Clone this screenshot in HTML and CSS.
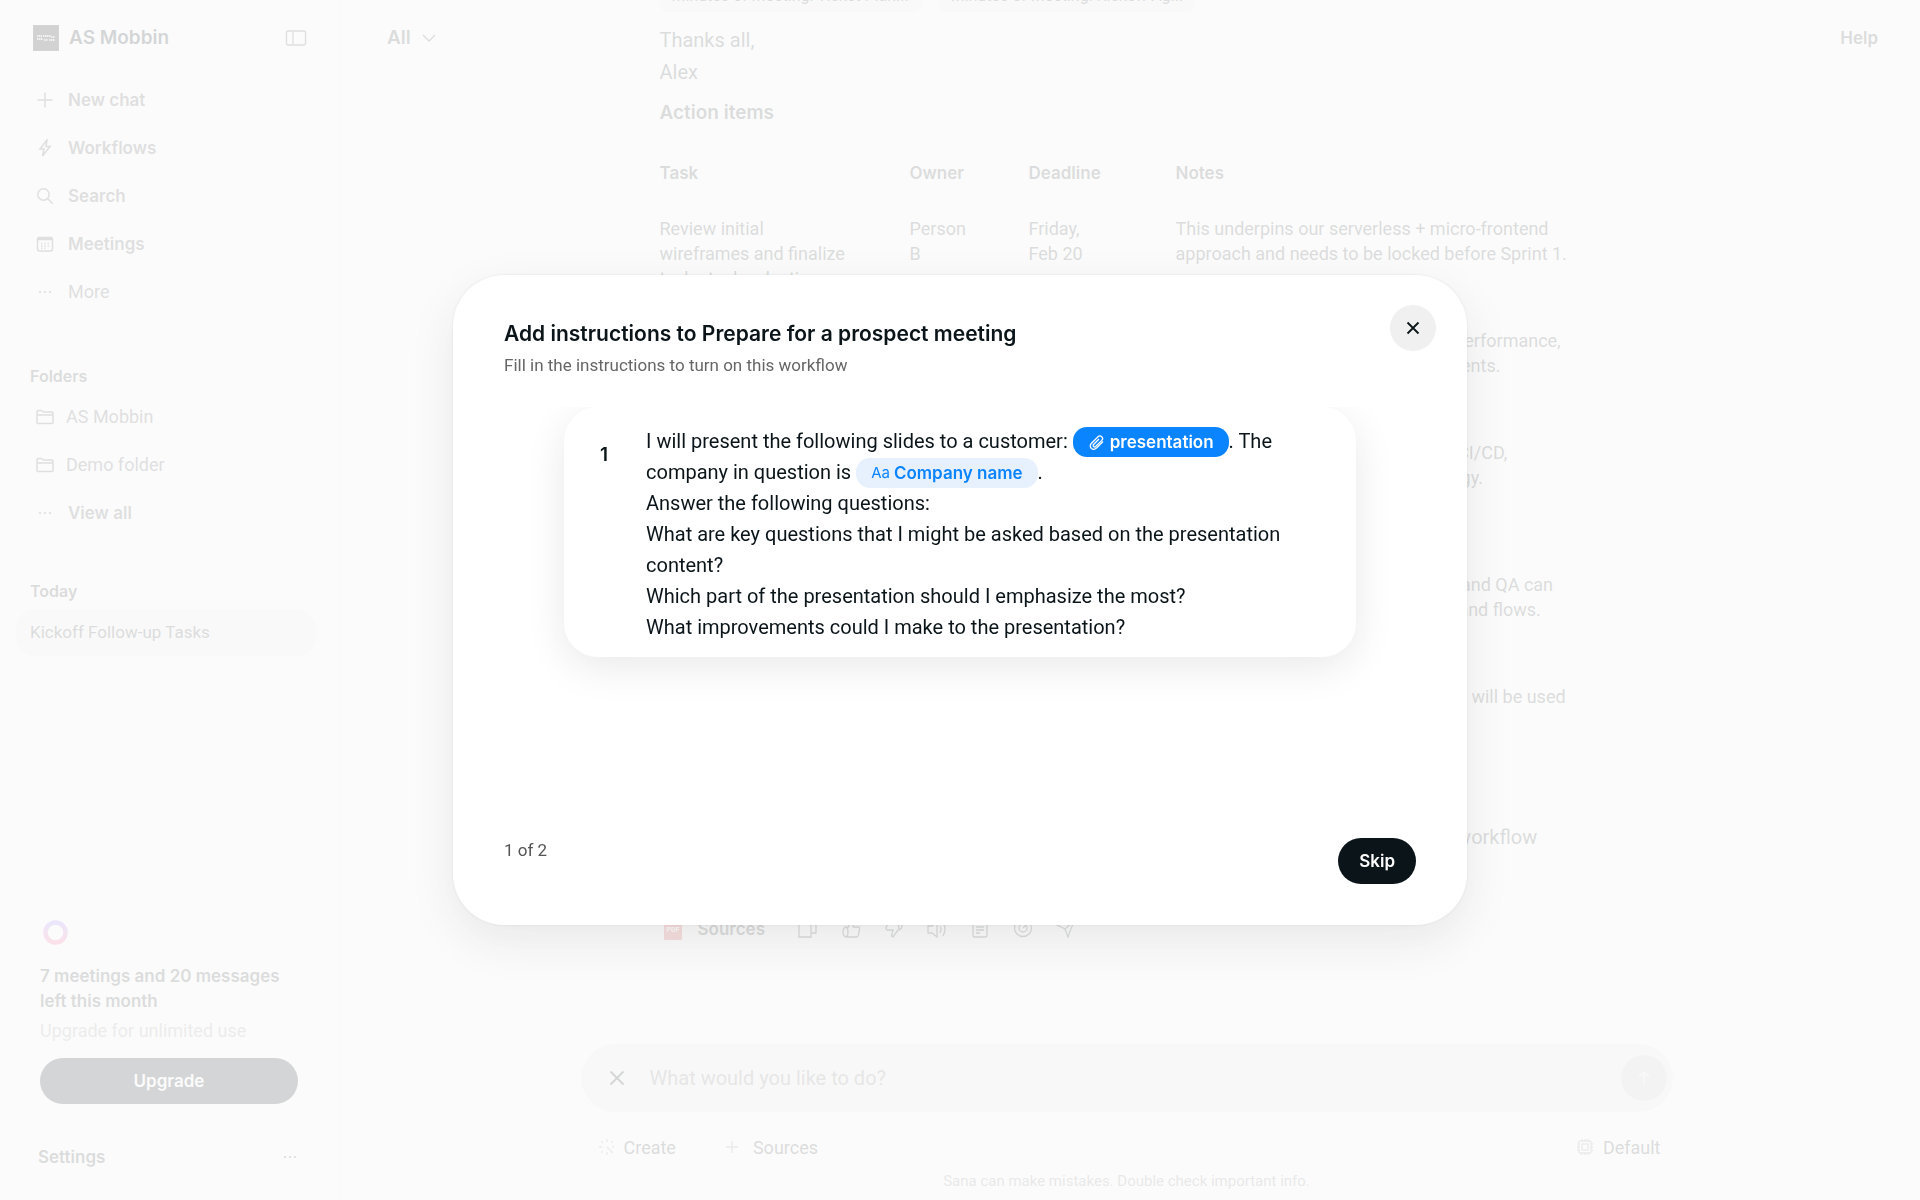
FILE: index.html
```html
<!DOCTYPE html>
<html lang="en">

<head>
    <meta charset="utf-8" />
    <title>Kickoff Follow-up Tasks</title>
    <meta name="viewport" content="width=device-width, initial-scale=1.0" />
    <link rel="stylesheet" href="styles.css">
</head>

<body>
    <div class="app">
        <aside class="sidebar">
            <div class="brand">
                <svg class="brand-logo" viewBox="0 0 26 26">
                    <rect width="26" height="26" fill="#000" />
                    <path d="M4 11h5M10 11h8M4 14h6M11 15h4M16 15h6M18 12h4" stroke="#fff" stroke-dasharray="1.5 .5" />
                </svg>
                <span class="brand-name">AS Mobbin</span>
                <button class="icon-button" aria-label="Toggle sidebar">
                    <svg width="22" height="22" viewBox="0 0 22 22"><rect x="1.5" y="4" width="19" height="14" rx="1.5" /><path d="M8 4v14" /></svg>
                </button>
            </div>

            <nav class="nav">
                <a class="nav-item" href="#">
                    <svg viewBox="0 0 18 18"><path d="M9 1.500v15M1.500 9h15" /></svg>New chat</a>
                <a class="nav-item" href="#">
                    <svg viewBox="0 0 18 18"><path d="M11 1 4 10h4l-1.500 7L14 7.500h-4z" /></svg>Workflows</a>
                <a class="nav-item" href="#">
                    <svg viewBox="0 0 18 18"><circle cx="7.500" cy="7.500" r="5.700" /><path d="m11.700 11.700 5 5" /></svg>Search</a>
                <a class="nav-item" href="#">
                    <svg viewBox="0 0 18 18"><rect x="1.500" y="2.500" width="15" height="13.500" rx="2" /><path d="M2 4h14" stroke-width="2.500" /><path d="M5 8.500h8M5 11h8M5 13.300h5" stroke-dasharray="1.300 2" /></svg>Meetings</a>
                <a class="nav-item light" href="#">
                    <svg class="dots" viewBox="0 0 18 18"><circle cx="4" cy="9" r="1.100" /><circle cx="9" cy="9" r="1.100" /><circle cx="14" cy="9" r="1.100" /></svg>More</a>
            </nav>

            <h2 class="side-title folders-title">Folders</h2>
            <nav class="nav folders">
                <a class="nav-item folder" href="#">
                    <svg viewBox="0 0 18 18"><path d="M1 14.500v-11q0-1 1-1h3.500l2 1.500H16q1 0 1 1v9.500q0 1-1 1H2q-1 0-1-1zM1 7h16" /></svg>AS Mobbin</a>
                <a class="nav-item folder" href="#">
                    <svg viewBox="0 0 18 18"><path d="M1 14.500v-11q0-1 1-1h3.500l2 1.500H16q1 0 1 1v9.500q0 1-1 1H2q-1 0-1-1zM1 7h16" /></svg>Demo folder</a>
                <a class="nav-item" href="#">
                    <svg class="dots" viewBox="0 0 18 18"><circle cx="4" cy="9" r="1.100" /><circle cx="9" cy="9" r="1.100" /><circle cx="14" cy="9" r="1.100" /></svg>View all</a>
            </nav>

            <h2 class="side-title today-title">Today</h2>
            <a class="chat-link" href="#">Kickoff Follow-up Tasks</a>

            <div class="promo">
                <svg class="promo-ring" width="28" height="26" viewBox="0 0 28 26">
                    <defs>
                        <linearGradient id="ring" x1="0" y1="0" x2="0" y2="1">
                            <stop offset="0" stop-color="#9a7dff" />
                            <stop offset="1" stop-color="#ff5f8f" />
                        </linearGradient>
                    </defs>
                    <circle cx="15.500" cy="12.500" r="10" stroke="url(#ring)" stroke-width="4.500" />
                </svg>
                <p class="promo-title">7 meetings and 20 messages left this month</p>
                <p class="promo-text">Upgrade for unlimited use</p>
                <button class="upgrade">Upgrade</button>
            </div>

            <div class="settings">
                <a href="#">Settings</a>
                <svg class="dots" width="18" height="18" viewBox="0 0 18 18"><circle cx="4" cy="9" r="1.100" /><circle cx="9" cy="9" r="1.100" /><circle cx="14" cy="9" r="1.100" /></svg>
            </div>
        </aside>

        <main class="main">
            <header class="topbar">
                <button class="filter">All
                    <svg width="14" height="14" viewBox="0 0 14 14"><path d="m1 4 6 6 6-6" /></svg>
                </button>
                <a class="help" href="#">Help</a>
            </header>

            <section class="chat">
                <div class="thread">
                    <div class="chips">
                        <span class="chip">Minutes of Meeting: Ticket Plan...</span>
                        <span class="chip">Minutes of Meeting: Kickoff Ag...</span>
                    </div>
                    <p>Thanks all,<br>Alex</p>
                    <h3>Action items</h3>
                    <table class="tasks">
                        <thead>
                            <tr>
                                <th class="col-task">Task</th>
                                <th class="col-owner">Owner</th>
                                <th class="col-deadline">Deadline</th>
                                <th>Notes</th>
                            </tr>
                        </thead>
                        <tbody>
                            <tr>
                                <td>Review initial wireframes and finalize tech stack selection</td>
                                <td>Person B</td>
                                <td>Friday, Feb&nbsp;20</td>
                                <td>This underpins our serverless + micro-frontend approach and needs to be locked before Sprint 1.</td>
                            </tr>
                            <tr>
                                <td>Define technical requirements</td>
                                <td>Person C</td>
                                <td>Friday, Feb&nbsp;20</td>
                                <td>Should cover scalability, security &amp; performance,<br>and all of those third-party requirements.</td>
                            </tr>
                            <tr>
                                <td>Set up repositories, environments and the delivery pipeline for the team</td>
                                <td>Person B</td>
                                <td>Monday, Feb&nbsp;23</td>
                                <td>Covers all of the environments and CI/CD,<br>along with the agreed release strategy.</td>
                            </tr>
                            <tr>
                                <td>Share the latest designs</td>
                                <td>Person D</td>
                                <td>Tuesday, Feb&nbsp;24</td>
                                <td>Needed so that the whole front-end and QA can<br>start working on all the edge cases and flows.</td>
                            </tr>
                            <tr>
                                <td>Prepare the sprint board</td>
                                <td>Person A</td>
                                <td>Tuesday, Feb&nbsp;24</td>
                                <td>The first board with all the estimates will be used<br>for planning.</td>
                            </tr>
                        </tbody>
                    </table>
                    <p class="closing">If you would like me to, I can also turn these action items into a reusable follow-up project workflow</p>
                    <div class="actions">
                        <svg class="pdf" width="18" height="22" viewBox="0 0 18 22">
                            <rect width="18" height="22" rx="1" />
                            <text x="9" y="14" text-anchor="middle">PDF</text>
                        </svg>
                        <button class="sources-link">Sources</button>
                        <button class="icon-button" aria-label="Copy"><svg width="20" height="20" viewBox="0 0 20 20"><path d="M1 5h12v13H1zM5 5V2h13v12h-5" /></svg></button>
                        <button class="icon-button" aria-label="Good answer"><svg width="20" height="20" viewBox="0 0 20 20"><path d="M7 9l3-7q3 0 2.500 3L12 8h5q2 0 1.500 2l-1 6q-.5 2-2 2H8l-2-1M6 8Q2 8 2 13t4 5q2-5 0-10z" /></svg></button>
                        <button class="icon-button" aria-label="Bad answer"><svg width="20" height="20" viewBox="0 0 20 20"><path d="M14 11l-5 7q-2-1-1-3l1-4H4q-2 0-2-2l2-5q1-2 3-2h5l3 1M15 11q3-1 3-5t-3-3q-1 4 0 8z" /></svg></button>
                        <button class="icon-button" aria-label="Read aloud"><svg width="20" height="20" viewBox="0 0 20 20"><path d="M1 7h4l5-4v15l-5-4H1zM13 7q2 3 0 7M16 4q4 6 0 13" /></svg></button>
                        <button class="icon-button" aria-label="Save as note"><svg width="20" height="20" viewBox="0 0 20 20"><rect x="3" y="3" width="14" height="15" rx="2" /><path d="M7 1v4M13 1v4M6 8h8M6 11h8M6 14h4" /></svg></button>
                        <button class="icon-button" aria-label="Target"><svg width="20" height="20" viewBox="0 0 20 20"><circle cx="10" cy="9" r="8.500" /><circle cx="10" cy="9" r="4" /><path d="M10 9l4-4" /></svg></button>
                        <button class="icon-button" aria-label="Send"><svg width="20" height="20" viewBox="0 0 20 20"><path d="M1 6 18 2l-6 16-3-8zM9 10l9-8" /></svg></button>
                    </div>
                </div>
            </section>

            <footer class="composer">
                <div class="composer-box">
                    <button class="icon-button" aria-label="Clear"><svg width="16" height="16" viewBox="0 0 16 16"><path d="m1.500 1.500 13 13M14.500 1.500l-13 13" stroke-width="1.800" /></svg></button>
                    <input type="text" placeholder="What would you like to do?" aria-label="Message">
                    <button class="send" aria-label="Send message"><svg width="18" height="18" viewBox="0 0 18 18"><path d="M9 16V3M4 8l5-5 5 5" /></svg></button>
                </div>
                <div class="tools">
                    <button class="tool">
                        <svg width="16" height="16" viewBox="0 0 16 16"><path d="M8 0v3M2.300 2.300l1.500 1.500M13.700 2.300l-1.500 1.500M0 8h3M13 8h2M2.300 13.700l1.500-1.500M8 13v3M8 8l6 6" /></svg>Create</button>
                    <button class="tool tool-sources">
                        <svg width="12" height="12" viewBox="0 0 12 12"><path d="M6 0v12M0 6h12" /></svg>Sources</button>
                    <button class="tool tool-model">
                        <svg width="16" height="16" viewBox="0 0 16 16"><rect x="2" y="2" width="12" height="12" rx="1" /><rect x="5" y="5" width="6" height="6" /><path d="M5 0v2M8 0v2M11 0v2M5 14v2M8 14v2M11 14v2M0 5h2M0 8h2M0 11h2M14 5h2M14 8h2M14 11h2" /></svg>Default</button>
                </div>
                <p class="disclaimer">Sana can make mistakes. Double check important info.</p>
            </footer>
        </main>
    </div>

    <div class="overlay">
        <div class="modal" role="dialog" aria-labelledby="modal-title">
            <button class="modal-close" aria-label="Close"><svg width="14" height="14" viewBox="0 0 14 14"><path d="m1.500 1.500 11 11M12.500 1.500l-11 11" /></svg></button>
            <h1 id="modal-title">Add instructions to Prepare for a prospect meeting</h1>
            <p class="modal-subtitle">Fill in the instructions to turn on this workflow</p>

            <div class="steps">
                <div class="step">
                    <span class="step-number">1</span>
                    <div class="step-text">
                        I will present the following slides to a customer:
                        <button class="variable filled"><svg width="17" height="17" viewBox="0 0 17 17"><path d="M15 7.500 8.800 13.800Q6 16.500 3.500 14.500 1 12 3.500 9.300L10 2.700q2-1.700 3.800 0 1.700 1.800 0 3.700L7.600 12.500q-1 .9-2 0-.9-1 0-2L11 5" /></svg>presentation</button>.
                        The company in question is
                        <button class="variable"><span class="variable-type">Aa</span>Company name</button>.<br>
                        Answer the following questions:<br>
                        What are key questions that I might be asked based on the presentation content?<br>
                        Which part of the presentation should I emphasize the most?<br>
                        What improvements could I make to the presentation?
                    </div>
                </div>
            </div>

            <div class="modal-footer">
                <span class="modal-progress">1 of 2</span>
                <button class="skip">Skip</button>
            </div>
        </div>
    </div>
</body>

</html>
```
FILE: styles.css
```css
:root {
    --ink: #0b1519;
    --ink-soft: #3c4042;
    --ink-light: #505456;
    --blue: #0a84ff;
    --font-text: Roboto, sans-serif;
    --font-strong: Inter, sans-serif;
}

* {
    margin: 0;
    padding: 0;
    box-sizing: border-box;
}

body {
    font-family: var(--font-text);
    font-size: 18px;
    line-height: 25px;
    color: var(--ink);
}

button,
input {
    border: none;
    background: none;
    font: inherit;
    color: inherit;
}

a {
    color: inherit;
    text-decoration: none;
}

svg {
    flex-shrink: 0;
    fill: none;
    stroke: currentColor;
    stroke-width: 1.3;
}

svg.dots {
    fill: currentColor;
    stroke: none;
}

.icon-button {
    display: flex;
}

.app {
    display: flex;
    height: 100vh;
    overflow: hidden;
}

/* sidebar */

.sidebar {
    display: flex;
    flex-direction: column;
    width: 341px;
    flex-shrink: 0;
    padding: 0 24px 0 16px;
    background-color: #fafafa;
    border-right: 1px solid #f0f0f0;
    color: var(--ink-soft);
}

.brand {
    display: flex;
    align-items: center;
    gap: 10px;
    height: 76px;
    padding: 0 9px 0 17px;
    color: var(--ink);
}

.brand-logo {
    width: 26px;
    height: 26px;
}

.brand-name {
    flex: 1;
    font: 600 19px/28px var(--font-strong);
}

.brand .icon-button {
    color: var(--ink-light);
}

.nav-item {
    display: flex;
    align-items: center;
    gap: 14px;
    height: 48px;
    padding-left: 20px;
    font: 600 17px/24px var(--font-strong);
    color: var(--ink-light);
}

.nav-item svg {
    width: 18px;
    height: 18px;
    stroke-width: 1.5;
}

.nav-item.light,
.nav-item.folder {
    font: 400 18px/24px var(--font-text);
}

.nav-item.folder {
    gap: 12px;
}

.side-title {
    padding-left: 14px;
    font: 600 16px/24px var(--font-strong);
}

.folders-title {
    margin: 48px 0 5px;
}

.today-title {
    margin: 42px 0 6px;
}

.chat-link {
    padding: 11px 14px;
    border-radius: 20px;
    background-color: #f2f2f2;
    font-size: 17px;
}

.promo {
    display: flex;
    flex-direction: column;
    margin-top: auto;
    padding: 0 18px 0 24px;
}

.promo-title {
    margin-top: 18px;
    font: 600 17px/25px var(--font-strong);
}

.promo-text {
    margin-top: 4px;
    color: #a0a0a0;
}

.upgrade {
    height: 46px;
    margin-top: 15px;
    border-radius: 23px;
    background-color: var(--ink);
    color: #fff;
    font: 600 17px/24px var(--font-strong);
}

.settings {
    display: flex;
    align-items: center;
    justify-content: space-between;
    height: 48px;
    margin: 29px 0 19px;
    padding: 0 17px 0 22px;
    font: 600 17px/24px var(--font-strong);
}

/* chat */

.main {
    position: relative;
    flex: 1;
    min-width: 0;
    display: flex;
    flex-direction: column;
    padding-right: 8px;
}

.topbar {
    position: absolute;
    top: 0;
    left: 0;
    right: 0;
    display: flex;
    justify-content: space-between;
    padding: 24px 42px 0 46px;
    font: 600 17px/28px var(--font-strong);
    color: var(--ink-soft);
}

.filter {
    display: flex;
    align-items: center;
    gap: 11px;
    font-size: 19px;
}

.chat {
    flex: 1;
    min-height: 0;
    display: flex;
    flex-direction: column;
    justify-content: flex-end;
    overflow: hidden;
    padding: 0 24px 99px;
}

.thread {
    width: 100%;
    max-width: 934px;
    margin: 0 auto;
    font-size: 20px;
    line-height: 32px;
    color: var(--ink-soft);
}

.chips {
    display: flex;
    gap: 18px;
    margin-bottom: 12px;
}

.chip {
    padding: 0 12px;
    border-radius: 8px;
    background-color: #f0f0f0;
    font-size: 16px;
}

.thread h3 {
    margin: 9px 0 16px;
    font: 600 19px/32px var(--font-strong);
}

.tasks {
    width: 100%;
    table-layout: fixed;
    border-collapse: collapse;
    font-size: 18px;
    line-height: 25px;
    text-align: left;
}

.tasks th {
    height: 56px;
    font: 600 17px/24px var(--font-strong);
}

.tasks td {
    height: 112px;
    padding: 15px 60px 17px 0;
    vertical-align: top;
}

.tasks td:last-child {
    padding-right: 0;
}

.col-task {
    width: 250px;
}

.col-owner {
    width: 119px;
}

.col-deadline {
    width: 147px;
}

.closing {
    margin: 40px 0 60px;
}

.actions {
    display: flex;
    align-items: center;
    gap: 23px;
    height: 32px;
    color: var(--ink-soft);
}

.pdf {
    margin: 0 -7px 0 4px;
    fill: #e0524d;
    stroke: none;
}

.pdf text {
    fill: #fff;
    font: 700 7px var(--font-text);
}

.sources-link {
    margin-right: 10px;
    font: 600 17px/24px var(--font-strong);
}

.composer {
    padding: 0 24px 9px;
}

.composer-box,
.tools {
    display: flex;
    align-items: center;
    max-width: 1092px;
    margin: 0 auto;
}

.composer-box {
    gap: 25px;
    height: 68px;
    padding: 0 6px 0 28px;
    border-radius: 34px;
    background-color: #ececec;
}

.composer-box input {
    flex: 1;
    min-width: 0;
    font-size: 20px;
}

.composer-box input::placeholder {
    color: #7a7a7a;
}

.send {
    display: flex;
    align-items: center;
    justify-content: center;
    width: 46px;
    height: 46px;
    border-radius: 50%;
    background-color: #cfcfcf;
    color: #eee;
}

.tools {
    height: 48px;
    margin-top: 11px;
    padding: 0 12px 0 18px;
    color: var(--ink-soft);
}

.tool {
    display: flex;
    align-items: center;
    gap: 9px;
}

.tool svg {
    color: #999;
}

.tool-sources {
    gap: 15px;
    margin-left: 50px;
}

.tool-model {
    margin-left: auto;
    gap: 10px;
}

.disclaimer {
    font-size: 15px;
    line-height: 20px;
    text-align: center;
    color: #888;
}

/* dialog */

.overlay {
    position: fixed;
    inset: 0;
    display: flex;
    align-items: center;
    justify-content: center;
    background-color: rgb(250 250 250 / 84%);
}

.modal {
    position: relative;
    display: flex;
    flex-direction: column;
    width: 1014px;
    max-width: 100%;
    min-height: 650px;
    padding: 45px 51px 41px;
    border-radius: 51px;
    background-color: #fff;
    box-shadow: 0 0 3px rgb(0 0 0 / 8%), 0 16px 48px rgb(0 0 0 / 8%);
}

.modal-close {
    position: absolute;
    top: 30px;
    right: 31px;
    display: flex;
    align-items: center;
    justify-content: center;
    width: 46px;
    height: 46px;
    border-radius: 50%;
    background-color: #f0f0f0;
}

.modal-close svg {
    stroke-width: 1.8;
}

.modal h1 {
    font: 600 21px/28px var(--font-strong);
}

.modal-subtitle {
    margin-top: 5px;
    font-size: 17px;
    line-height: 24px;
    color: #666;
}

.steps {
    flex: 1;
    margin: 30px 0;
    padding: 0 60px;
    overflow: hidden;
}

.step {
    display: flex;
    padding: 19px 60px 14px 36px;
    border-radius: 34px;
    box-shadow: 0 10px 40px rgb(0 0 0 / 9%);
}

.step-number {
    width: 46px;
    padding-top: 13px;
    font: 600 19px/31px var(--font-strong);
}

.step-text {
    flex: 1;
    font-size: 20px;
    line-height: 31px;
}

.variable {
    display: inline-flex;
    align-items: center;
    gap: 4px;
    height: 30px;
    padding: 0 15px;
    border-radius: 14px;
    background-color: #e7f1fe;
    color: var(--blue);
    font: 600 17px/30px var(--font-strong);
    vertical-align: bottom;
}

.variable.filled {
    gap: 5px;
    background-color: var(--blue);
    color: #fff;
}

.variable-type {
    font-size: 15px;
    font-weight: 400;
}

.modal-footer {
    display: flex;
    justify-content: space-between;
}

.modal-progress {
    font-size: 17px;
    color: #555;
}

.skip {
    height: 46px;
    padding: 0 21px;
    border-radius: 23px;
    background-color: var(--ink);
    color: #fff;
    font: 600 17px/24px var(--font-strong);
}
```
